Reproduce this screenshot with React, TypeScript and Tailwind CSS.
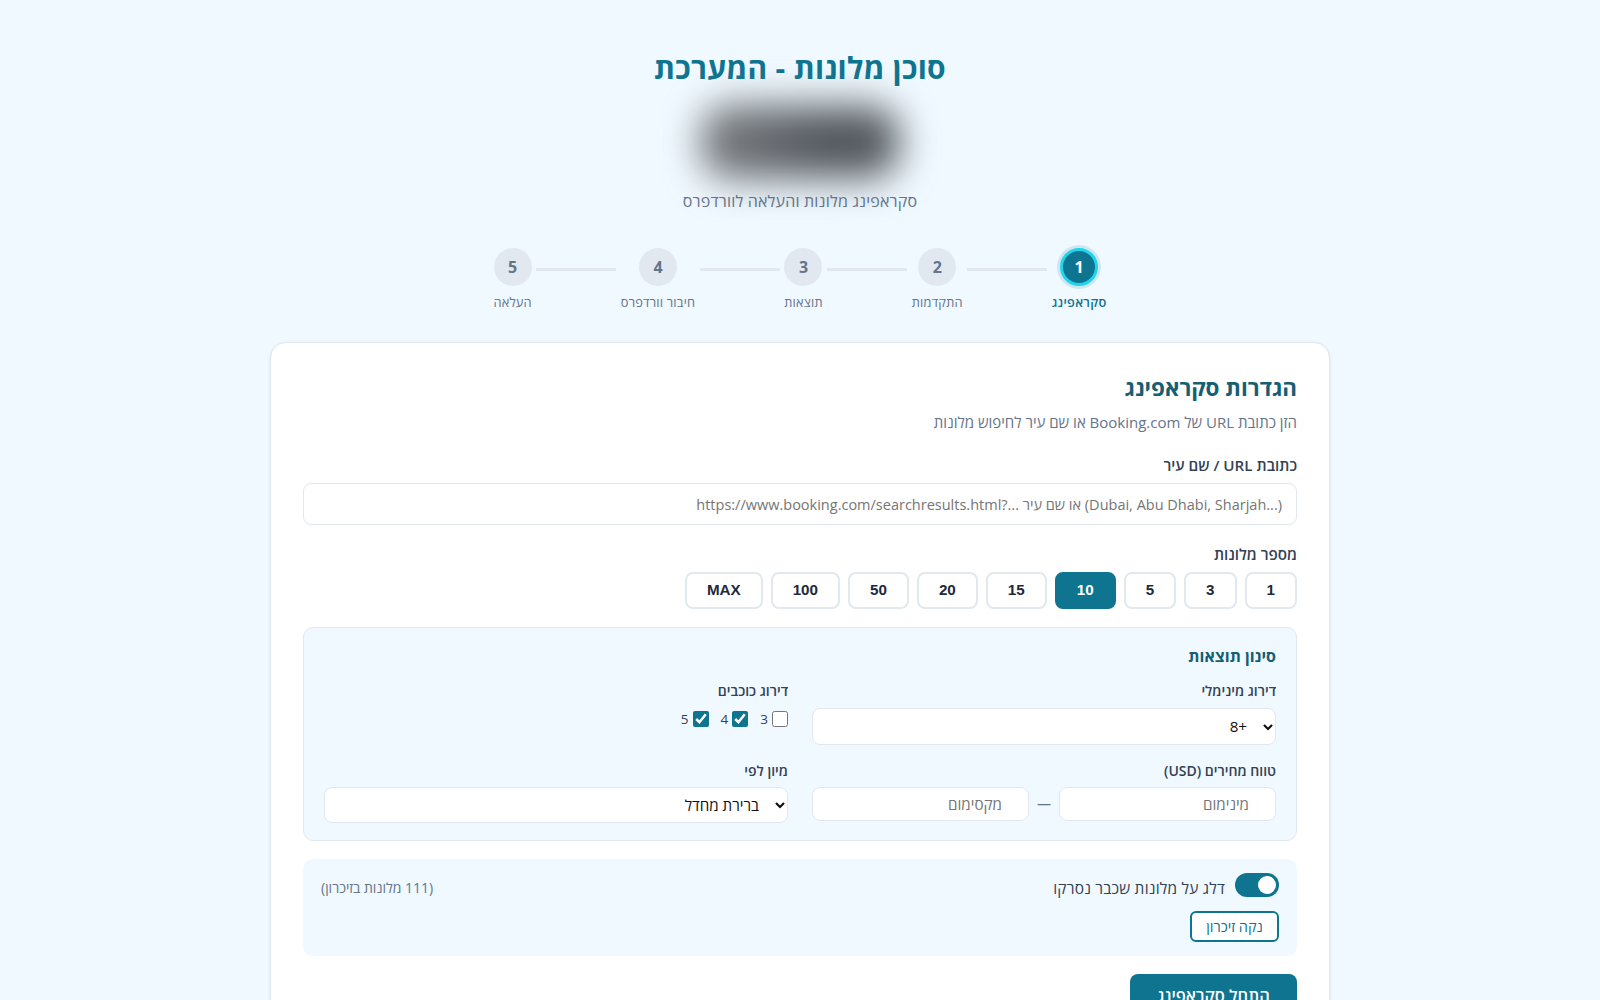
import React from "react";

const font = { fontFamily: '"Open Sans", "Noto Sans", sans-serif' };

const steps = ["סקראפינג", "התקדמות", "תוצאות", "חיבור וורדפרס", "העלאה"];
const counts = ["1", "3", "5", "10", "15", "20", "50", "100", "MAX"];

function Chevron() {
  return (
    <svg
      className="pointer-events-none absolute right-[2px] top-1/2 -translate-y-1/2"
      width="12"
      height="12"
      viewBox="0 0 12 12"
      fill="none"
    >
      <path d="M2 4l4 4 4-4" stroke="#111" strokeWidth="2.2" />
    </svg>
  );
}

function Select({ value, h }: { value: string; h: string }) {
  return (
    <div className="relative">
      <select
        defaultValue={value}
        className={`w-full appearance-none rounded-lg border border-[#e2e8f0] bg-white pr-[28px] pl-3 text-[15.2px] text-[#111] ${h}`}
      >
        <option>{value}</option>
      </select>
      <Chevron />
    </div>
  );
}

function FieldLabel({ children, className = "" }: { children: React.ReactNode; className?: string }) {
  return <div className={`text-[15.2px] leading-[18px] font-semibold text-[#334155] ${className}`}>{children}</div>;
}

function Label({ children }: { children: React.ReactNode }) {
  return <div className="text-[14px] leading-5 font-semibold text-[#334155]">{children}</div>;
}

export default function App() {
  return (
    <div dir="rtl" style={font} className="min-h-screen bg-[#f0f9ff] pt-[48px] pb-10 text-[#1e293b]">
      <div className="mx-auto w-[1060px]">
        <h1 className="text-center text-[30px] leading-10 font-bold tracking-[0.3px] text-[#0e7490]">סוכן מלונות - המערכת</h1>
        <div className="mx-auto mt-[15px] h-[78px] w-[200px] rounded-[32px] bg-[radial-gradient(ellipse_at_72%_50%,#3f444c_0%,#565b62_26%,#74787d_60%,#85888c_100%)] blur-[18px]"></div>
        <p className="relative mt-[8px] text-center text-base leading-6 tracking-[0.2px] text-[#64748b]">סקראפינג מלונות והעלאה לוורדפרס</p>

        <div className="mt-[35px] flex items-start justify-center">
          {steps.map((s, i) => (
            <React.Fragment key={s}>
              <div className="flex flex-col items-center">
                <div
                  className={
                    i === 0
                      ? "flex h-[38px] w-[38px] items-center justify-center rounded-full border-[3px] border-[#22d3ee] bg-[#0e7490] text-base font-bold text-white shadow-[0_0_0_3px_#cfe6ee]"
                      : "flex h-[38px] w-[38px] items-center justify-center rounded-full bg-[#e2e8f0] text-base font-bold text-[#64748b]"
                  }
                >
                  {i + 1}
                </div>
                <div
                  className={
                    i === 0
                      ? "mt-[8px] text-[12.8px] leading-4 font-semibold tracking-[0.3px] whitespace-nowrap text-[#0e7490]"
                      : "mt-[8px] text-[12.8px] leading-4 tracking-[0.2px] whitespace-nowrap text-[#64748b]"
                  }
                >
                  {s}
                </div>
              </div>
              {i < 4 && <div className="mx-[4.5px] mt-[20px] h-[3px] w-[80px] bg-[#e2e8f0]"></div>}
            </React.Fragment>
          ))}
        </div>

        <div className="mt-[32px] rounded-2xl border border-[#e2e8f0] bg-white p-8 shadow-sm">
          <h2 className="text-[22.4px] leading-[26px] font-bold text-[#155e75]">הגדרות סקראפינג</h2>
          <p className="mt-[12px] text-[15px] leading-[18px] text-[#64748b]">הזן כתובת URL של Booking.com או שם עיר לחיפוש מלונות</p>

          <FieldLabel className="mt-[25px]">כתובת URL / שם עיר</FieldLabel>
          <input
            dir="ltr"
            className="mt-[9px] block h-[42px] w-full rounded-lg border border-[#e2e8f0] bg-white px-[14px] text-right text-[14.5px] placeholder:text-[#757575]"
            placeholder="https://www.booking.com/searchresults.html?... או שם עיר (Dubai, Abu Dhabi, Sharjah...)"
          />

          <FieldLabel className="mt-[20px]">מספר מלונות</FieldLabel>
          <div className="mt-[9px] flex gap-2">
            {counts.map((c) => (
              <button
                key={c}
                className={
                  c === "10"
                    ? "h-[37px] rounded-lg border-2 border-[#0e7490] bg-[#0e7490] px-5 font-['Liberation_Sans'] text-[15.2px] font-bold text-white"
                    : "h-[37px] rounded-lg border-2 border-[#e2e8f0] bg-white px-5 font-['Liberation_Sans'] text-[15.2px] font-bold text-[#1e293b]"
                }
              >
                {c}
              </button>
            ))}
          </div>

          <div className="mt-[18px] rounded-[10px] border border-[#e2e8f0] bg-[#f0f9ff] px-5 pt-[18px] pb-[17px]">
            <h3 className="text-base leading-5 font-bold text-[#155e75]">סינון תוצאות</h3>
            <div className="mt-[15px] grid grid-cols-2 gap-x-6 gap-y-4">
              <div>
                <Label>דירוג מינימלי</Label>
                <div className="mt-[7px]">
                  <Select value="+8" h="h-[37px]" />
                </div>
              </div>
              <div>
                <Label>דירוג כוכבים</Label>
                <div className="mt-[10px] flex gap-3 text-[13.5px] leading-4 text-[#334155]">
                  <label className="flex items-center gap-1">
                    <input type="checkbox" className="m-0 h-4 w-4 accent-[#0e7490]" />3
                  </label>
                  <label className="flex items-center gap-1">
                    <input type="checkbox" defaultChecked className="m-0 h-4 w-4 accent-[#0e7490]" />4
                  </label>
                  <label className="flex items-center gap-1">
                    <input type="checkbox" defaultChecked className="m-0 h-4 w-4 accent-[#0e7490]" />5
                  </label>
                </div>
              </div>
              <div>
                <Label>טווח מחירים (USD)</Label>
                <div className="mt-[6px] flex items-center gap-2">
                  <input
                    placeholder="מינימום"
                    className="h-[34px] min-w-0 flex-1 rounded-lg border border-[#e2e8f0] bg-white pr-[26px] pl-3 text-[15.2px] placeholder:text-[#757575]"
                  />
                  <span className="text-sm text-[#64748b]">—</span>
                  <input
                    placeholder="מקסימום"
                    className="h-[34px] min-w-0 flex-1 rounded-lg border border-[#e2e8f0] bg-white pr-[26px] pl-3 text-[15.2px] placeholder:text-[#757575]"
                  />
                </div>
              </div>
              <div>
                <Label>מיון לפי</Label>
                <div className="mt-[6px]">
                  <Select value="ברירת מחדל" h="h-[36px]" />
                </div>
              </div>
            </div>
          </div>

          <div className="mt-[18px] rounded-[10px] bg-[#f0f9ff] px-[18px] py-[14px]">
            <div className="flex h-6 items-center justify-between">
              <div className="flex items-center gap-[10px]">
                <div className="flex h-6 w-11 items-center justify-start rounded-full bg-[#0e7490] px-[3px]">
                  <div className="h-[18px] w-[18px] rounded-full bg-white"></div>
                </div>
                <span className="translate-y-[3px] text-[15.5px] leading-5 font-medium tracking-[0.2px] text-[#334155]">דלג על מלונות שכבר נסרקו</span>
              </div>
              <span className="translate-y-[3px] text-[14px] leading-5 text-[#64748b]">(111 מלונות בזיכרון)</span>
            </div>
            <button className="mt-[14px] block h-[31px] w-[89px] rounded-md border-2 border-[#0e7490] bg-white text-[14.5px] font-medium text-[#0e7490]">
              נקה זיכרון
            </button>
          </div>

          <button className="mt-[18px] block h-[44px] w-[167px] rounded-lg bg-[#0e7490] text-[16.5px] font-semibold text-white">
            התחל סקראפינג
          </button>
        </div>
      </div>
    </div>
  );
}
